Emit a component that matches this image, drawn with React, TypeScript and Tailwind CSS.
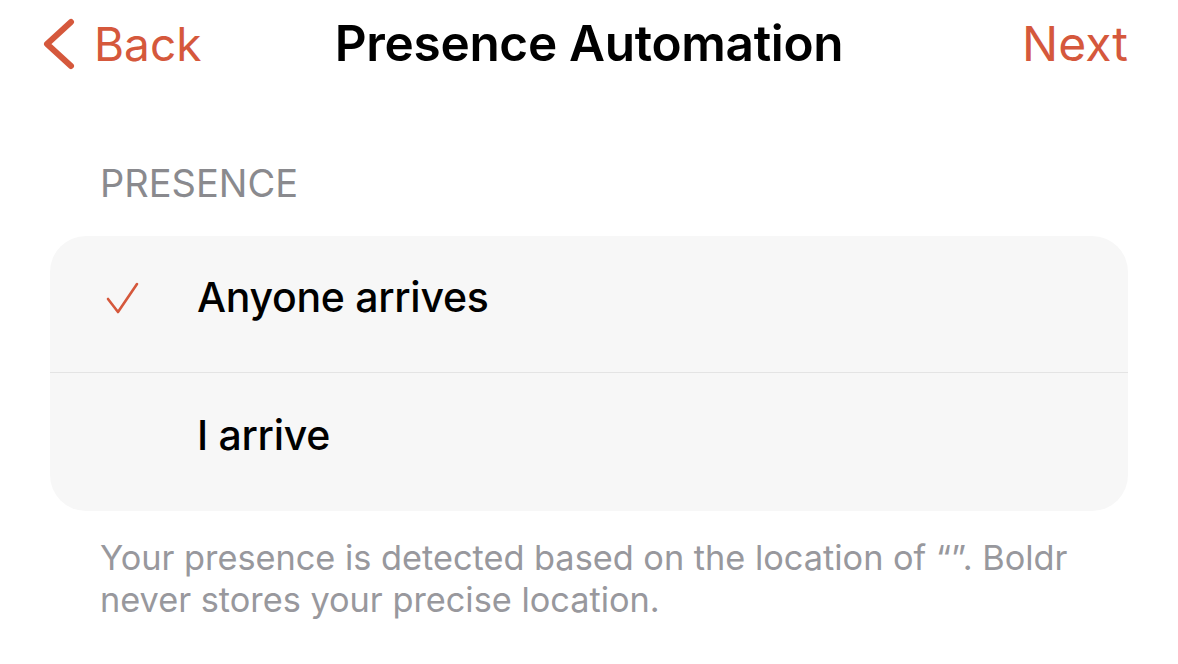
import React from 'react';

const accent = 'text-[#d5583c]';

const Chevron = () => (
  <svg width="36" height="52" viewBox="0 0 36 52" fill="none">
    <path d="M31 4 L7 26 L31 48" stroke="#d5583c" strokeWidth="6" strokeLinecap="round" strokeLinejoin="round" />
  </svg>
);

const Check = () => (
  <svg width="34" height="34" viewBox="0 0 34 34" fill="none">
    <path d="M2 18 L12 31 L31 3" stroke="#d5583c" strokeWidth="2.6" strokeLinecap="round" strokeLinejoin="round" />
  </svg>
);

const Row = ({ label, checked, last }: { label: string; checked?: boolean; last?: boolean }) => (
  <div className={`flex items-center pb-[12px] ${last ? 'h-[138px]' : 'h-[137px] border-b border-[#e4e4e4]'}`}>
    <div className="w-[147px] pl-[56px] flex items-center">{checked && <Check />}</div>
    <span className="text-[41px] font-medium text-black tracking-[-0.3px]">{label}</span>
  </div>
);

export default function App() {
  return (
    <div className="w-[1178px] h-[664px] bg-white overflow-hidden" style={{ fontFamily: 'Inter, "Noto Sans", sans-serif' }}>
      {/* header */}
      <div className="grid grid-cols-[1fr_auto_1fr] items-center h-[88px] px-[50px]">
        <div className={`flex items-center gap-[18px] ${accent}`}>
          <div className="-ml-[10px]"><Chevron /></div>
          <span className="text-[46px] font-normal leading-none">Back</span>
        </div>
        <h1 className="text-[49.5px] font-semibold text-black leading-none tracking-[-0.3px]">Presence Automation</h1>
        <div className={`flex justify-end ${accent}`}>
          <span className="text-[48px] font-normal leading-none">Next</span>
        </div>
      </div>

      {/* section */}
      <div className="px-[50px] pt-[76px]">
        <p className="pl-[50px] text-[38px] text-[#8a8a8e] leading-none">PRESENCE</p>
        <div className="mt-[34px] bg-[#f7f7f7] rounded-[36px] overflow-hidden">
          <Row label="Anyone arrives" checked />
          <Row label="I arrive" last />
        </div>
        <p className="pl-[50px] pr-[40px] mt-[26px] text-[34.3px] leading-[42px] text-[#98989d]">
          Your presence is detected based on the location of “”. Boldr never stores your precise location.
        </p>
      </div>
    </div>
  );
}
